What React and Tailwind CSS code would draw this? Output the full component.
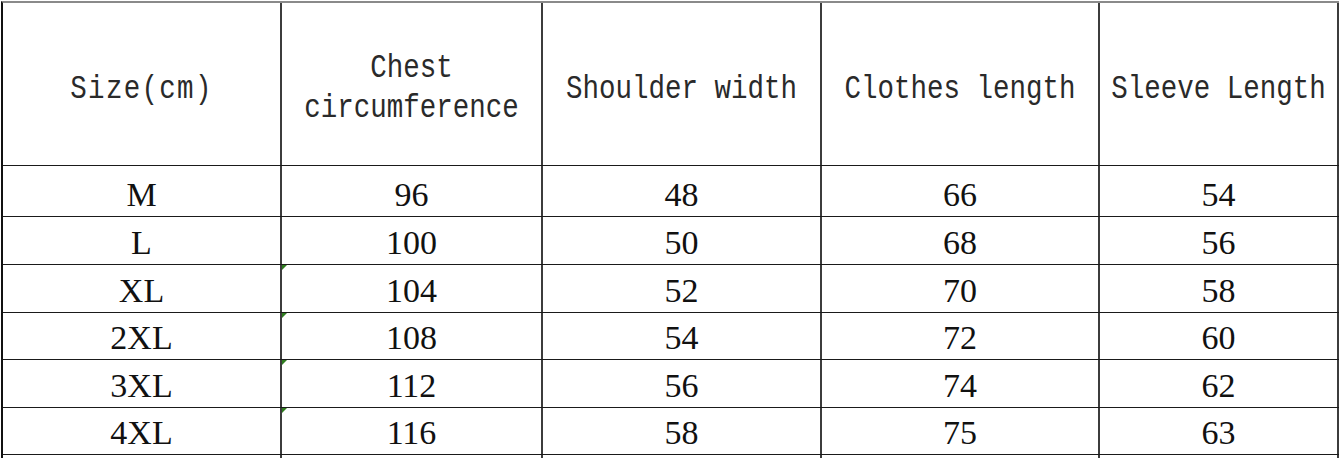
const columns = ["w-[279px]", "w-[261px]", "w-[279px]", "w-[278px]", "w-[239px]"];

const rows = [
  { h: "h-[51px]", cells: ["M", "96", "48", "66", "54"] },
  { h: "h-[48px]", cells: ["L", "100", "50", "68", "56"] },
  { h: "h-[48px]", cells: ["XL", "104", "52", "70", "58"], flag: true },
  { h: "h-[47px]", cells: ["2XL", "108", "54", "72", "60"], flag: true },
  { h: "h-[48px]", cells: ["3XL", "112", "56", "74", "62"], flag: true },
  { h: "h-[47px]", cells: ["4XL", "116", "58", "75", "63"], flag: true },
  { h: "h-[48px]", cells: ["", "", "", "", ""] },
];

function HeaderCell({ width, wide, children }) {
  return (
    <div className={`${width} flex shrink-0 items-center justify-center border-r-2 border-r-[#3c3c3c] pt-[8px] text-center`}>
      <div
        className={`origin-center scale-y-[1.22] font-['Liberation_Mono',monospace] text-[27.5px] leading-[33px] text-[#2a2a2a] ${wide ? "tracking-[1.3px]" : ""}`}
      >
        {children}
      </div>
    </div>
  );
}

export default function App() {
  return (
    <div className="h-[458px] w-[1342px] overflow-hidden bg-white pl-[1px] pt-[1px]">
      <div className="w-[1338px] border-t-2 border-l-2 border-t-[#8a8a8a] border-l-[#111]">
        <div className="flex h-[163px] border-b border-b-[#1a1a1a]">
          <HeaderCell width={columns[0]} wide>
            Size(cm)
          </HeaderCell>
          <HeaderCell width={columns[1]}>
            Chest
            <br />
            circumference
          </HeaderCell>
          <HeaderCell width={columns[2]}>Shoulder width</HeaderCell>
          <HeaderCell width={columns[3]}>Clothes length</HeaderCell>
          <HeaderCell width={columns[4]}>Sleeve Length</HeaderCell>
        </div>
        {rows.map((row, i) => (
          <div key={i} className={`${row.h} flex border-b border-b-[#1a1a1a]`}>
            {row.cells.map((value, j) => (
              <div
                key={j}
                className={`${columns[j]} relative flex shrink-0 items-end justify-center border-r-2 border-r-[#3c3c3c] pb-[4px] font-['Liberation_Serif',serif] text-[34px] leading-[34px] text-[#111]`}
              >
                {row.flag && j === 1 && (
                  <span className="absolute top-0 left-0 h-0 w-0 border-t-[5px] border-r-[5px] border-t-[#2f7d1f] border-r-transparent" />
                )}
                {value}
              </div>
            ))}
          </div>
        ))}
      </div>
    </div>
  );
}
